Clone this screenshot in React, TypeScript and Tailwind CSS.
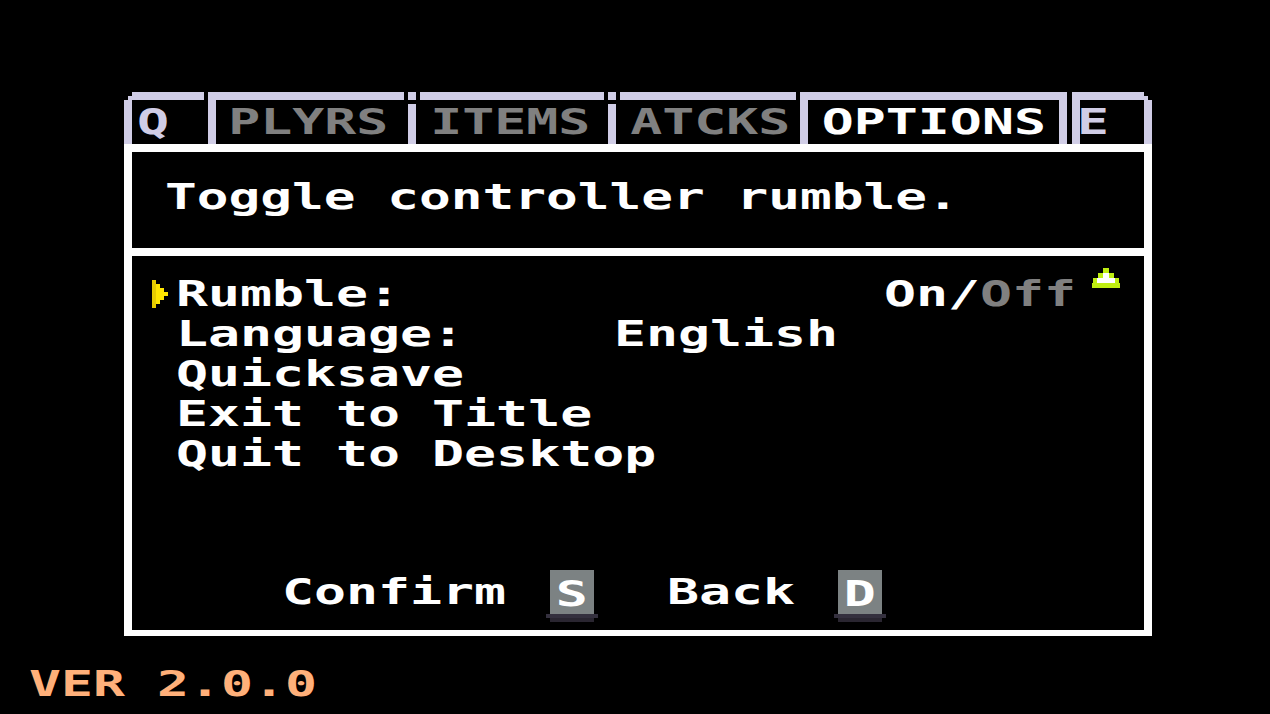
import React from "react";

function S({ children, className = "" }: { children: React.ReactNode; className?: string }) {
  return (
    <span className={"inline-block whitespace-pre origin-left scale-x-[1.477] " + className}>{children}</span>
  );
}

function C({ children }: { children: React.ReactNode }) {
  return <span className="inline-block whitespace-pre origin-center scale-x-[1.477]">{children}</span>;
}

function Key({ k }: { k: string }) {
  return (
    <div className="flex w-[52px] flex-col items-center">
      <div className="flex h-[44px] w-[44px] justify-center bg-[#7c8283] pt-[4px] text-white">
        <C>{k}</C>
      </div>
      <div className="h-[4px] w-[52px] bg-[#34303e]" />
      <div className="h-[4px] w-[44px] bg-[#2a2631]" />
    </div>
  );
}

function Cursor() {
  return (
    <svg width="16" height="28" viewBox="0 0 16 28" shapeRendering="crispEdges">
      <rect x="0" y="0" width="4" height="4" fill="#ffe600" />
      <rect x="0" y="4" width="8" height="4" fill="#ffe600" />
      <rect x="0" y="8" width="12" height="4" fill="#ffe600" />
      <rect x="0" y="12" width="16" height="4" fill="#ffe600" />
      <rect x="0" y="16" width="12" height="4" fill="#ffe600" />
      <rect x="0" y="20" width="8" height="4" fill="#ffe600" />
      <rect x="0" y="24" width="4" height="4" fill="#ffe600" />
      <rect x="0" y="0" width="4" height="28" fill="#e6cc00" />
    </svg>
  );
}

function UpArrow() {
  return (
    <svg width="28" height="20" viewBox="0 0 28 20" shapeRendering="crispEdges">
      <rect x="11" y="0" width="6" height="5" fill="#bfee12" />
      <rect x="6" y="5" width="16" height="5" fill="#bfee12" />
      <rect x="11" y="5" width="6" height="5" fill="#ffffff" />
      <rect x="1" y="10" width="26" height="5" fill="#bfee12" />
      <rect x="5" y="10" width="18" height="5" fill="#ffffff" />
      <rect x="0" y="15" width="28" height="5" fill="#bfee12" />
    </svg>
  );
}

export default function App() {
  return (
    <div className="flex h-[714px] w-full flex-col overflow-hidden bg-black pt-[92px] font-['DejaVu_Sans_Mono',monospace] text-[36px] font-bold leading-[40px]">
      <div className="ml-[124px] flex w-[1028px] flex-col">
        {/* Tabs */}
        <div className="flex h-[52px] gap-[4px]">
          {/* Q */}
          <div className="flex w-[80px] flex-col">
            <div className="flex h-[8px]">
              <div className="flex w-[8px] flex-col">
                <div className="h-[4px]" />
                <div className="ml-[4px] h-[4px] w-[4px] bg-[#d0cde6]" />
              </div>
              <div className="flex-1 bg-[#d0cde6]" />
            </div>
            <div className="flex flex-1">
              <div className="w-[8px] bg-[#d0cde6]" />
              <div className="pl-[5px] pt-[2px] text-[#d0cde6]">
                <S>Q</S>
              </div>
            </div>
          </div>
          {/* PLYRS */}
          <div className="flex w-[196px] flex-col">
            <div className="h-[8px] bg-[#d0cde6]" />
            <div className="flex flex-1">
              <div className="w-[8px] bg-[#d0cde6]" />
              <div className="flex flex-1 justify-center pr-[4px] pt-[2px] text-[#808080]">
                <C>PLYRS</C>
              </div>
            </div>
          </div>
          {/* ITEMS */}
          <div className="flex w-[196px]">
            <div className="flex w-[8px] flex-col">
              <div className="h-[8px] bg-[#d0cde6]" />
              <div className="h-[4px]" />
              <div className="flex-1 bg-[#d0cde6]" />
            </div>
            <div className="flex flex-1 flex-col">
              <div className="ml-[4px] h-[8px] bg-[#d0cde6]" />
              <div className="flex flex-1 justify-center pt-[2px] text-[#808080]">
                <C>ITEMS</C>
              </div>
            </div>
          </div>
          {/* ATCKS */}
          <div className="flex w-[188px]">
            <div className="flex w-[8px] flex-col">
              <div className="h-[8px] bg-[#d0cde6]" />
              <div className="h-[4px]" />
              <div className="flex-1 bg-[#d0cde6]" />
            </div>
            <div className="flex flex-1 flex-col">
              <div className="ml-[4px] h-[8px] bg-[#d0cde6]" />
              <div className="flex flex-1 justify-center pl-[8px] pt-[2px] text-[#808080]">
                <C>ATCKS</C>
              </div>
            </div>
          </div>
          {/* OPTIONS */}
          <div className="flex w-[267px] flex-col">
            <div className="h-[8px] bg-[#d0cde6]" />
            <div className="flex flex-1">
              <div className="w-[8px] bg-[#d0cde6]" />
              <div className="flex flex-1 justify-center pt-[2px] text-white">
                <C>OPTIONS</C>
              </div>
              <div className="w-[8px] bg-[#d0cde6]" />
            </div>
          </div>
          {/* E */}
          <div className="ml-[1px] flex w-[80px] flex-col">
            <div className="flex h-[8px]">
              <div className="flex-1 bg-[#d0cde6]" />
              <div className="flex w-[8px] flex-col">
                <div className="h-[4px]" />
                <div className="h-[4px] w-[4px] bg-[#d0cde6]" />
              </div>
            </div>
            <div className="flex flex-1">
              <div className="w-[8px] bg-[#d0cde6]" />
              <div className="ml-[-3px] flex-1 pt-[2px] text-[#d0cde6]">
                <S>E</S>
              </div>
              <div className="w-[8px] bg-[#d0cde6]" />
            </div>
          </div>
        </div>

        {/* Frame */}
        <div className="flex h-[492px] flex-col border-x-[8px] border-b-[6px] border-t-[8px] border-white">
          <div className="h-[96px] pl-[33px] pt-[25px] text-white">
            <span className="inline-block whitespace-pre origin-left scale-x-[1.465]">Toggle controller rumble.</span>
          </div>
          <div className="h-[8px] bg-white" />
          <div className="relative flex flex-1 flex-col pt-[18px] text-white">
            <div className="absolute left-[960px] top-[12px]">
              <UpArrow />
            </div>
            <div className="flex h-[40px]">
              <div className="w-[44px] pl-[20px] pt-[6px]">
                <Cursor />
              </div>
              <div className="w-[708px]">
                <S>Rumble:</S>
              </div>
              <S>
                <span className="text-white">On/</span>
                <span className="text-[#808080]">Off</span>
              </S>
            </div>
            <div className="flex h-[40px]">
              <div className="w-[44px]" />
              <div className="w-[438px]">
                <S>Language:</S>
              </div>
              <S>English</S>
            </div>
            <div className="flex h-[40px]">
              <div className="w-[44px]" />
              <S>Quicksave</S>
            </div>
            <div className="flex h-[40px]">
              <div className="w-[44px]" />
              <S>Exit to Title</S>
            </div>
            <div className="flex h-[40px]">
              <div className="w-[44px]" />
              <S>Quit to Desktop</S>
            </div>

            <div className="mb-[8px] mt-auto flex items-start pl-[150px]">
              <div className="mt-[2px] w-[224px]">
                <S>Confirm</S>
              </div>
              <div className="ml-[40px]">
                <Key k="S" />
              </div>
              <div className="ml-[69px] mt-[2px] w-[128px]">
                <S>Back</S>
              </div>
              <div className="ml-[39px]">
                <Key k="D" />
              </div>
            </div>
          </div>
        </div>
      </div>

      <div className="mt-[28px] pl-[29px] text-[#ffb07a]">
        <S>VER 2.0.0</S>
      </div>
    </div>
  );
}
